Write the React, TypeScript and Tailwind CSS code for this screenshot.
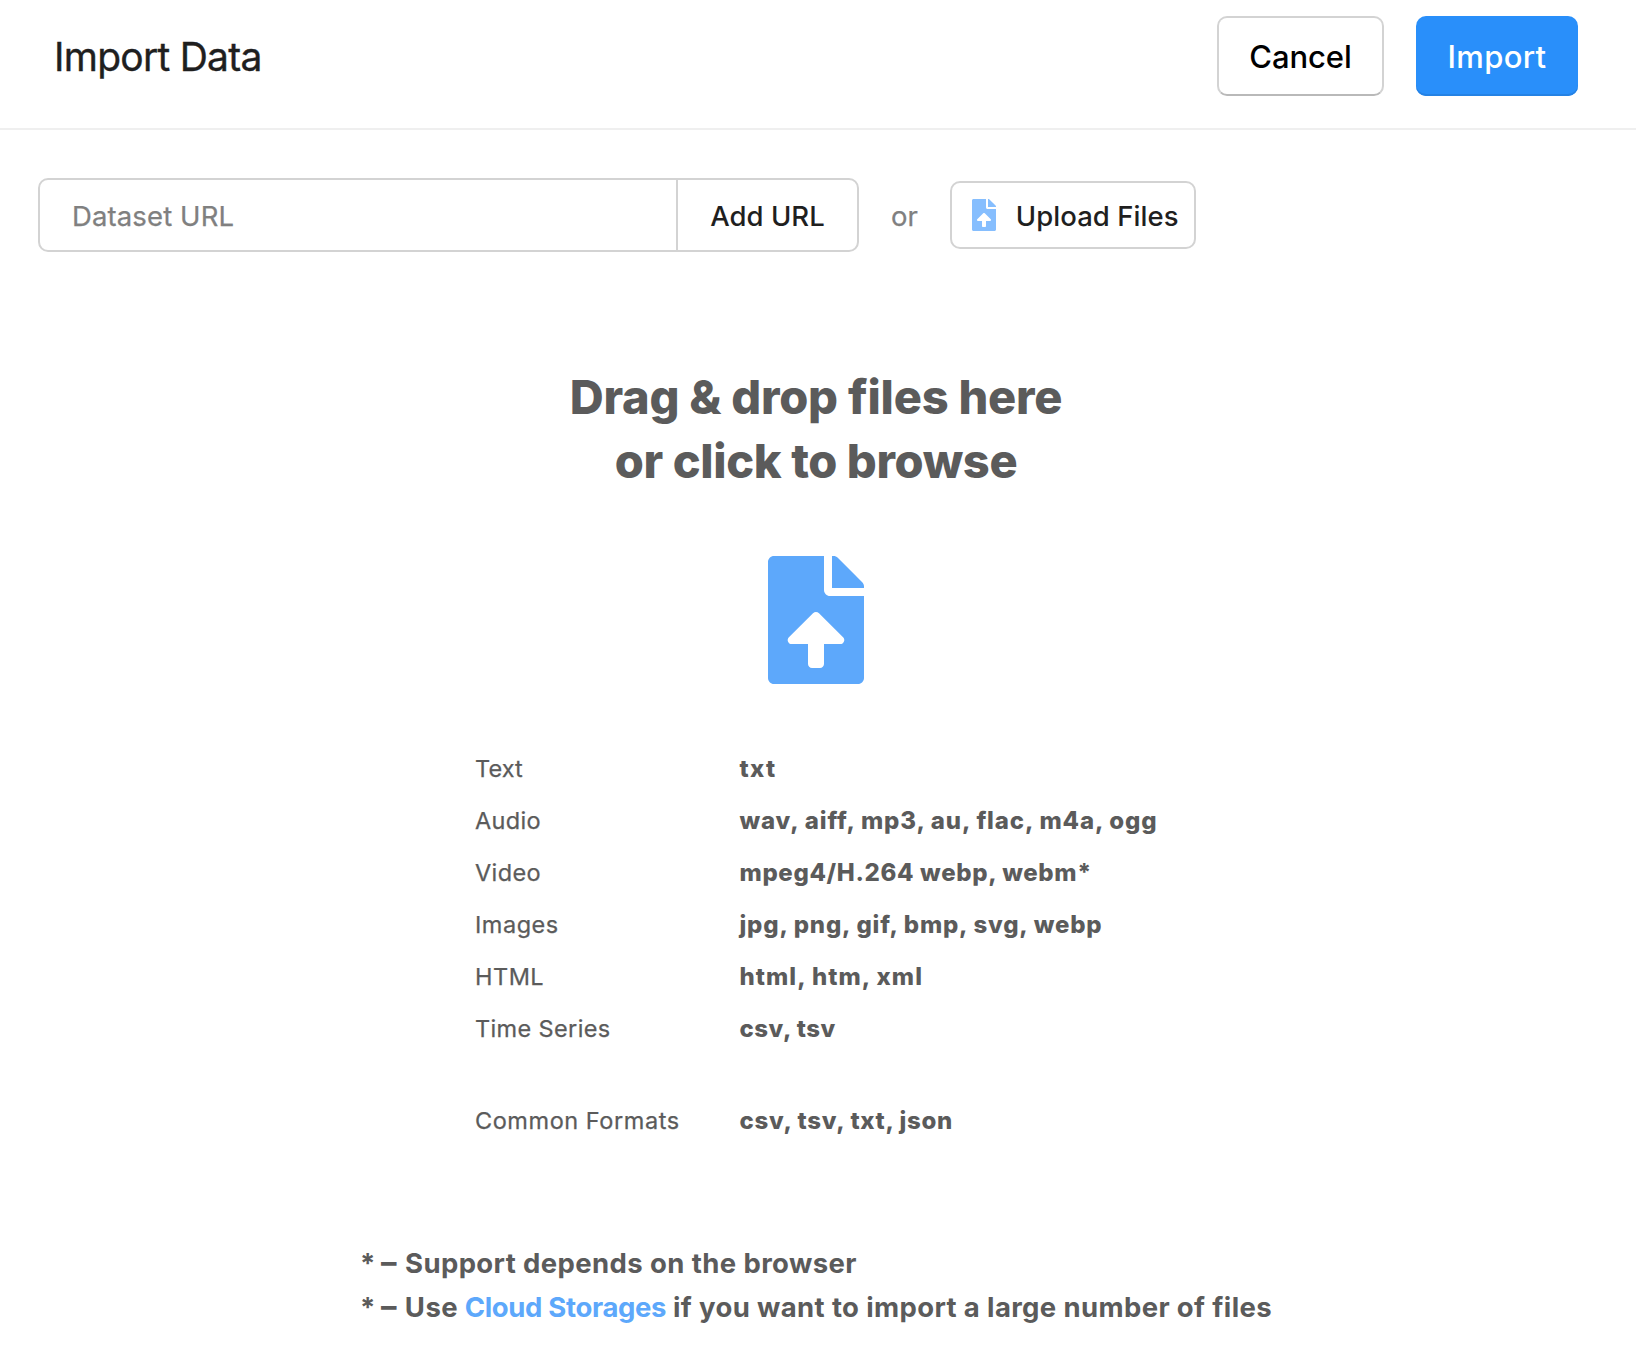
import React from "react";
import { FaFileUpload } from "react-icons/fa";

type Format = {
  label: string;
  value: string;
  labelClass: string;
  valueClass: string;
};

const formats: Format[] = [
  { label: "Text", value: "txt", labelClass: "tracking-[0.1px]", valueClass: "tracking-[1.34px]" },
  { label: "Audio", value: "wav, aiff, mp3, au, flac, m4a, ogg", labelClass: "tracking-[0.33px]", valueClass: "tracking-[0.88px]" },
  { label: "Video", value: "mpeg4/H.264 webp, webm*", labelClass: "tracking-[0.38px]", valueClass: "tracking-[0.65px]" },
  { label: "Images", value: "jpg, png, gif, bmp, svg, webp", labelClass: "tracking-[0.52px]", valueClass: "tracking-[0.82px]" },
  { label: "HTML", value: "html, htm, xml", labelClass: "tracking-[0.5px]", valueClass: "tracking-[1.05px]" },
  { label: "Time Series", value: "csv, tsv", labelClass: "tracking-[0.36px]", valueClass: "tracking-[0.52px]" },
];

const common: Format = {
  label: "Common Formats",
  value: "csv, tsv, txt, json",
  labelClass: "tracking-[0.55px]",
  valueClass: "tracking-[0.7px]",
};

function FormatRow({ format }: { format: Format }) {
  return (
    <div className="grid h-[52px] grid-cols-[264.5px_auto] items-center pt-[2px] whitespace-nowrap">
      <dt className={`text-[23.5px] [-webkit-text-stroke:0.25px] ${format.labelClass}`}>{format.label}</dt>
      <dd className={`text-[24px] font-extrabold ${format.valueClass}`}>{format.value}</dd>
    </div>
  );
}

function Header() {
  return (
    <header className="flex h-[130px] items-start justify-between border-b-2 border-[#efefef] pt-4 pr-[58px] pl-[54px]">
      <h1 className="flex h-20 items-center pt-[3px] text-[39px] tracking-[-0.75px] text-[#1f1f1f] [-webkit-text-stroke:0.4px]">
        Import Data
      </h1>
      <div className="flex gap-8 text-[31px] font-medium">
        <button className="flex h-20 w-[167px] items-center justify-center rounded-[10px] border-2 border-[#d3d3d3] border-b-[#b9b9b9] pt-[2px] tracking-[-0.1px] text-black">
          Cancel
        </button>
        <button className="flex h-20 w-[162px] items-center justify-center rounded-[10px] bg-[#298ffa] pt-[2px] tracking-[0.35px] text-white shadow-[inset_0_-2px_0_#2582e4]">
          Import
        </button>
      </div>
    </header>
  );
}

function SourceBar() {
  return (
    <div className="flex items-center pl-[38px] text-[#1f1f1f]">
      <div className="flex h-[74px] w-[821px] rounded-[10px] border-2 border-[#d3d3d3]">
        <input
          className="w-[636px] pt-[4px] pl-[32px] text-[27.5px] tracking-[0.12px] outline-none [-webkit-text-stroke:0.25px] placeholder:text-[#808080] placeholder:opacity-100"
          placeholder="Dataset URL"
        />
        <button className="flex flex-1 items-center justify-center border-l-2 border-[#d3d3d3] pt-[3px] text-[27.5px] font-medium tracking-[0.02px]">
          Add URL
        </button>
      </div>
      <span className="ml-8 pt-[3px] text-[27.5px] text-[#808080] [-webkit-text-stroke:0.25px]">or</span>
      <button className="ml-8 flex h-[68px] w-[246px] items-center rounded-[10px] border-2 border-[#d3d3d3] pl-5 text-[27.5px] font-medium">
        <FaFileUpload className="h-8 w-6 shrink-0 text-[#86befe]" />
        <span className="ml-5 pt-[3px] tracking-[0.05px] whitespace-nowrap">Upload Files</span>
      </button>
    </div>
  );
}

function NoteMark() {
  return (
    <>
      <span className="w-[21px]">*</span>
      <span className="w-6 text-[31px] leading-none">–</span>
    </>
  );
}

export default function App() {
  return (
    <div className="h-[1358px] w-[1636px] overflow-hidden bg-white font-['Inter',sans-serif]">
      <Header />
      <div className="pt-12">
        <SourceBar />
      </div>
      <main className="flex flex-col items-center pt-[113px] pr-1 text-[#5b5b5b]">
        <h2 className="text-center text-[47px] leading-[64px] font-extrabold">
          <span className="block tracking-[-0.22px]">Drag &amp; drop files here</span>
          <span className="block tracking-[-0.38px]">or click to browse</span>
        </h2>
        <FaFileUpload className="mt-[63px] h-32 w-24 text-[#5da8fb]" />
        <dl className="mt-[58px] w-[682px]">
          {formats.map((f) => (
            <FormatRow key={f.label} format={f} />
          ))}
          <div className="mt-10">
            <FormatRow format={common} />
          </div>
        </dl>
        <div className="mt-[95px] w-[912px] text-[27.5px] leading-[44px] font-bold whitespace-nowrap">
          <p className="flex items-baseline">
            <NoteMark />
            <span className="tracking-[0.39px]">Support depends on the browser</span>
          </p>
          <p className="flex items-baseline">
            <NoteMark />
            <span className="w-[60px] tracking-[0.4px]">Use</span>
            <a className="w-[209px] tracking-[-0.34px] text-[#5da8fb]">Cloud Storages</a>
            <span className="tracking-[0.37px]">if you want to import a large number of files</span>
          </p>
        </div>
      </main>
    </div>
  );
}
